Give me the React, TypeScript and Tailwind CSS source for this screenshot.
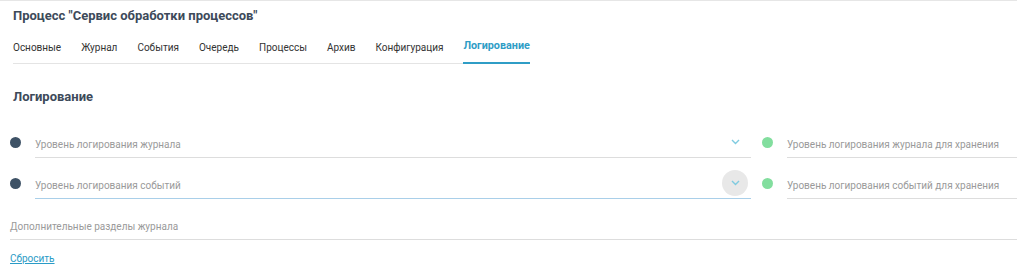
import React from "react";

const tabs = ["Основные", "Журнал", "События", "Очередь", "Процессы", "Архив", "Конфигурация", "Логирование"];

function Chevron() {
  return (
    <svg width="9" height="6" viewBox="0 0 9 6" fill="none">
      <polyline points="1,1 4.5,4.5 8,1" stroke="#7fcbe0" strokeWidth="1.4" />
    </svg>
  );
}

function Field({ label, active, focused }: { label: string; active?: boolean; focused?: boolean }) {
  return (
    <div
      className={`flex-1 h-[34px] border-b ${focused ? "border-[#a9cfe9]" : "border-[#dddddd]"} flex items-center pt-[8px] pr-[3px]`}
    >
      <span className="flex-1 text-[10px] text-[#9a9a9a] leading-[13px] whitespace-nowrap">{label}</span>
      {active !== undefined && (
        <div
          className={`w-[26px] h-[26px] rounded-full flex items-center justify-center mt-[-5px] ${active ? "bg-[#e8e8e8]" : ""}`}
        >
          <Chevron />
        </div>
      )}
    </div>
  );
}

function Dot({ color }: { color: string }) {
  return <div className={`w-[11px] h-[11px] rounded-full self-start mt-[13px] shrink-0 ${color}`} />;
}

export default function App() {
  return (
    <div className="w-[1017px] h-[275px] bg-white border-t border-[#e6e6e6] font-['Roboto',sans-serif] overflow-hidden">
      <div className="px-[13px] h-[29px] flex items-center">
        <h1 className="text-[13px] font-bold text-[#3d4a5a] leading-[16px]">Процесс "Сервис обработки процессов"</h1>
      </div>
      <div className="ml-[13px] w-[517px] flex gap-[20px] border-b border-[#e4e4e4] h-[34px]">
        {tabs.map((t) => {
          const act = t === "Логирование";
          return (
            <div
              key={t}
              className={`h-[34px] flex items-center ${act ? "text-[10.8px] font-bold text-[#2f9dc6] border-b-2 border-[#2f9dc6] mb-[-1px] pt-[1px]" : "text-[10px] text-[#333333]"}`}
            >
              {t}
            </div>
          );
        })}
      </div>
      <h2 className="ml-[13px] mt-[25px] text-[13px] font-bold text-[#3d4a5a] leading-[16px]">Логирование</h2>
      <div className="mt-[19px] flex flex-col gap-[7px]">
        <div className="flex items-start">
          <div className="w-[35px] pl-[10px] shrink-0 flex">
            <Dot color="bg-[#3e5266]" />
          </div>
          <Field label="Уровень логирования журнала" active={false} />
          <div className="w-[36px] pl-[11px] shrink-0 flex">
            <Dot color="bg-[#82de9e]" />
          </div>
          <div className="w-[230px] shrink-0 flex">
            <Field label="Уровень логирования журнала для хранения" />
          </div>
        </div>
        <div className="flex items-start">
          <div className="w-[35px] pl-[10px] shrink-0 flex">
            <Dot color="bg-[#3e5266]" />
          </div>
          <Field label="Уровень логирования событий" active={true} focused />
          <div className="w-[36px] pl-[11px] shrink-0 flex">
            <Dot color="bg-[#82de9e]" />
          </div>
          <div className="w-[230px] shrink-0 flex">
            <Field label="Уровень логирования событий для хранения" />
          </div>
        </div>
        <div className="pl-[10px] flex">
          <Field label="Дополнительные разделы журнала" />
        </div>
      </div>
      <div className="ml-[10px] mt-[10px] leading-[14px]">
        <a href="#" className="text-[10px] text-[#2a9bc6] underline">Сбросить</a>
      </div>
    </div>
  );
}
